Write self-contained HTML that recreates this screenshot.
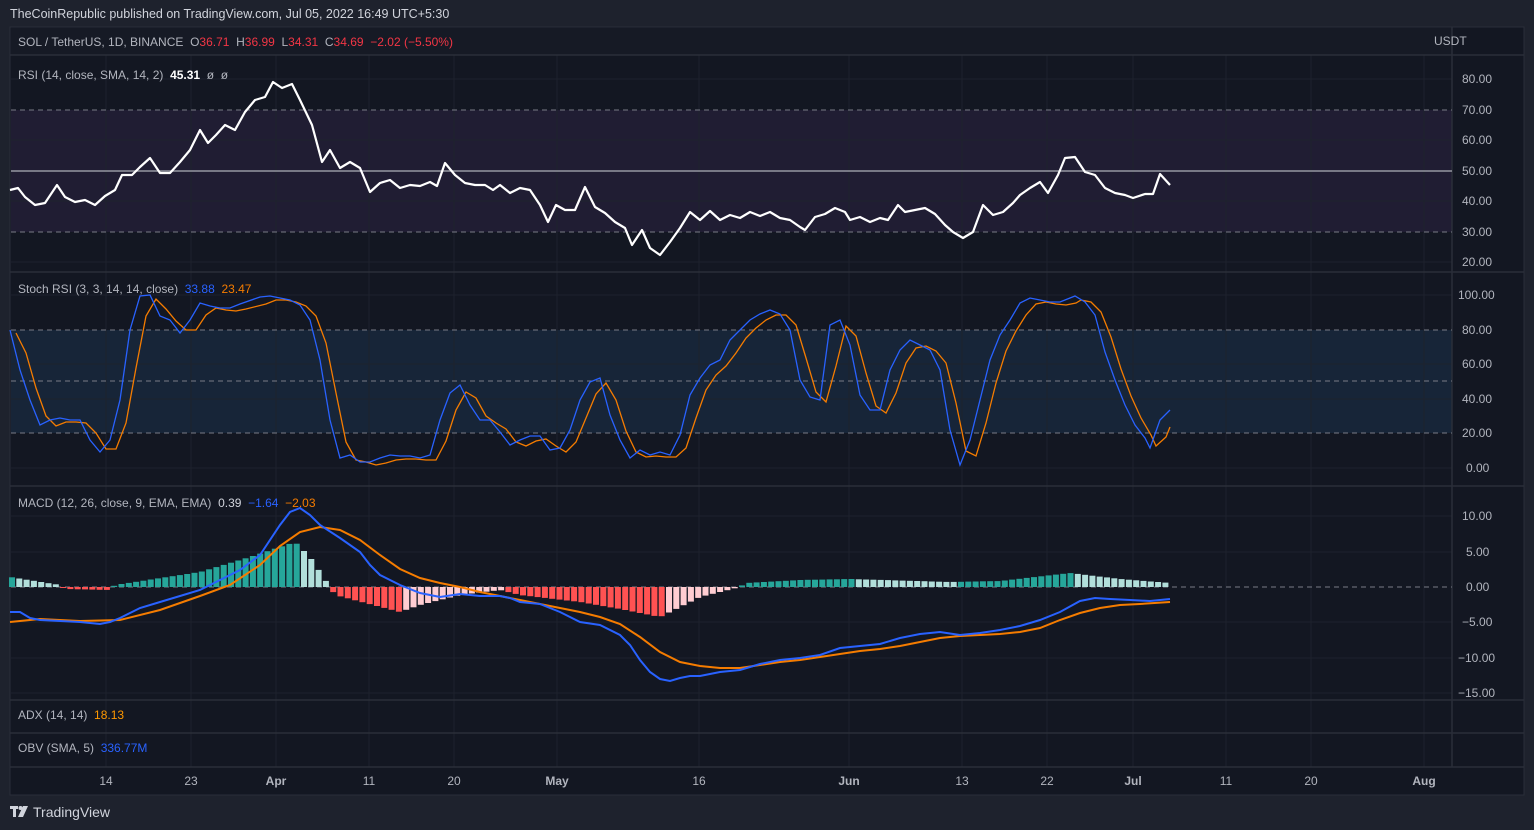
<!DOCTYPE html>
<html><head><meta charset="utf-8"><style>
*{margin:0;padding:0;box-sizing:border-box}
body{width:1534px;height:830px;background:#1e222d;font-family:"Liberation Sans",sans-serif;overflow:hidden;position:relative}
.t{position:absolute;font-size:12px;color:#b2b5be;white-space:nowrap}
</style></head><body>
<div class="t" style="left:10px;top:7px;font-size:12.5px;color:#d1d4dc">TheCoinRepublic published on TradingView.com, Jul 05, 2022 16:49 UTC+5:30</div>
<svg id="s" width="1534" height="830" style="position:absolute;left:0;top:0">
<rect x="10" y="27" width="1514" height="768" fill="#131722" stroke="#2a2e39"/>
<rect x="11" y="28" width="1441" height="27" fill="#161a25"/>
<rect x="11" y="110" width="1441" height="122" fill="#201d33"/>
<rect x="11" y="330" width="1441" height="103" fill="#172538"/>
<g stroke="#1e222d" stroke-width="1">
<line x1="106" y1="55" x2="106" y2="767"/><line x1="191" y1="55" x2="191" y2="767"/><line x1="276" y1="55" x2="276" y2="767"/><line x1="369" y1="55" x2="369" y2="767"/><line x1="454" y1="55" x2="454" y2="767"/><line x1="557" y1="55" x2="557" y2="767"/><line x1="699" y1="55" x2="699" y2="767"/><line x1="849" y1="55" x2="849" y2="767"/><line x1="962" y1="55" x2="962" y2="767"/><line x1="1047" y1="55" x2="1047" y2="767"/><line x1="1133" y1="55" x2="1133" y2="767"/><line x1="1226" y1="55" x2="1226" y2="767"/><line x1="1311" y1="55" x2="1311" y2="767"/><line x1="1424" y1="55" x2="1424" y2="767"/>
<line x1="11" y1="79" x2="1452" y2="79"/><line x1="11" y1="140" x2="1452" y2="140"/><line x1="11" y1="201" x2="1452" y2="201"/><line x1="11" y1="262" x2="1452" y2="262"/>
<line x1="11" y1="295" x2="1452" y2="295"/><line x1="11" y1="364" x2="1452" y2="364"/><line x1="11" y1="399" x2="1452" y2="399"/><line x1="11" y1="468" x2="1452" y2="468"/>
<line x1="11" y1="516" x2="1452" y2="516"/><line x1="11" y1="552" x2="1452" y2="552"/><line x1="11" y1="622" x2="1452" y2="622"/><line x1="11" y1="658" x2="1452" y2="658"/><line x1="11" y1="693" x2="1452" y2="693"/>
</g>
<g stroke="#2a2e39" stroke-width="1.5">
<line x1="10" y1="55" x2="1524" y2="55"/><line x1="10" y1="272" x2="1524" y2="272"/><line x1="10" y1="486" x2="1524" y2="486"/><line x1="10" y1="700" x2="1524" y2="700"/><line x1="10" y1="733" x2="1524" y2="733"/><line x1="10" y1="767" x2="1524" y2="767"/><line x1="1452" y1="27" x2="1452" y2="767"/>
</g>
<g stroke="#787b86" stroke-dasharray="5,4" stroke-width="1">
<line x1="11" y1="110" x2="1452" y2="110"/><line x1="11" y1="232" x2="1452" y2="232"/>
<line x1="11" y1="330" x2="1452" y2="330"/><line x1="11" y1="381" x2="1452" y2="381"/><line x1="11" y1="433" x2="1452" y2="433"/>
<line x1="11" y1="587" x2="1452" y2="587"/>
</g>
<line x1="11" y1="171" x2="1452" y2="171" stroke="#9598a1" stroke-width="1.5"/>
<g id="hist"></g>
<polyline fill="none" stroke="#fff" stroke-width="2.2" stroke-linejoin="round" points="10,190 18,188 25,197 35,205 45,203 57,185 65,197 75,202 85,200 95,205 105,196 115,190 122,175 132,175 140,167 150,158 160,173 170,173 180,162 190,150 200,130 208,143 216,135 225,125 235,130 245,112 255,100 265,97 273,82 282,88 292,84 300,100 312,125 322,162 330,150 340,168 350,162 360,168 370,192 380,183 390,180 400,188 410,185 420,186 430,182 437,186 445,163 455,175 465,183 475,185 485,185 493,190 500,185 510,193 520,188 530,190 540,205 548,222 556,205 565,210 575,210 585,187 595,207 605,213 615,222 625,228 632,245 642,230 650,248 660,255 670,242 680,228 690,212 700,220 710,211 720,220 730,215 740,218 750,212 760,216 770,212 780,218 790,220 800,227 805,230 815,217 825,214 835,208 845,212 850,220 860,217 870,222 880,218 888,220 898,205 905,212 915,210 925,208 935,214 945,225 953,232 963,238 973,232 983,205 993,215 1003,212 1013,203 1020,195 1030,188 1040,182 1048,193 1058,175 1065,158 1075,157 1085,172 1095,175 1105,188 1115,193 1125,195 1133,198 1145,194 1153,194 1160,174 1170,185"/>
<polyline id="so" fill="none" stroke="#f57c00" stroke-width="1.3"/>
<polyline id="sb" fill="none" stroke="#2962ff" stroke-width="1.3"/>
<polyline fill="none" stroke="#f57c00" stroke-width="2" points="10,622 40,619 80,621 120,620 160,610 200,596 230,585 260,565 280,546 300,532 320,527 340,530 360,540 380,555 400,569 420,578 440,583 460,587 480,592 500,596 520,600 540,604 560,608 580,612 600,617 620,624 640,637 660,652 680,662 700,666 720,668 740,668 760,665 780,662 800,660 820,657 840,654 860,651 880,649 900,646 920,642 940,638 960,636 980,635 1000,634 1020,632 1040,628 1060,620 1080,613 1100,608 1120,605 1140,604 1170,602"/>
<polyline fill="none" stroke="#2962ff" stroke-width="2" points="10,612 20,612 30,618 40,620 60,621 80,622 100,624 110,622 120,618 140,608 160,602 180,596 200,590 220,580 240,570 260,555 270,540 280,525 290,512 300,508 310,515 320,525 340,538 360,552 370,565 380,575 400,585 420,593 440,597 460,594 480,596 500,596 510,598 520,602 540,604 560,612 580,622 600,625 620,635 630,645 640,660 650,672 660,679 670,681 680,678 690,676 700,676 720,672 740,670 760,664 780,660 800,658 820,655 840,648 860,646 880,644 900,638 920,634 940,632 960,635 980,633 1000,630 1020,626 1040,620 1060,612 1080,601 1095,598 1110,599 1130,600 1150,601 1170,599"/>
<g font-family="Liberation Sans,sans-serif" font-size="12" fill="#b2b5be">
<text x="1434" y="45">USDT</text>
<text x="1462" y="83">80.00</text><text x="1462" y="114">70.00</text><text x="1462" y="144">60.00</text><text x="1462" y="175">50.00</text><text x="1462" y="205">40.00</text><text x="1462" y="236">30.00</text><text x="1462" y="266">20.00</text>
<text x="1458" y="299">100.00</text><text x="1462" y="334">80.00</text><text x="1462" y="368">60.00</text><text x="1462" y="403">40.00</text><text x="1462" y="437">20.00</text><text x="1466" y="472">0.00</text>
<text x="1462" y="520">10.00</text><text x="1466" y="556">5.00</text><text x="1466" y="591">0.00</text><text x="1462" y="626">−5.00</text><text x="1458" y="662">−10.00</text><text x="1458" y="697">−15.00</text>
<g text-anchor="middle"><text x="106" y="785">14</text><text x="191" y="785">23</text><text x="276" y="785" font-weight="bold">Apr</text><text x="369" y="785">11</text><text x="454" y="785">20</text><text x="557" y="785" font-weight="bold">May</text><text x="699" y="785">16</text><text x="849" y="785" font-weight="bold">Jun</text><text x="962" y="785">13</text><text x="1047" y="785">22</text><text x="1133" y="785" font-weight="bold">Jul</text><text x="1226" y="785">11</text><text x="1311" y="785">20</text><text x="1424" y="785" font-weight="bold">Aug</text></g>
</g>
<g fill="#d1d4dc"><rect x="10" y="806" width="8" height="3"/><rect x="13" y="806" width="3" height="11"/><circle cx="20.5" cy="808" r="2"/><polygon points="23,806 28,806 23,817 18,817"/></g>
</svg>
<div class="t" style="left:18px;top:35px"><span style="color:#b2b5be">SOL / TetherUS, 1D, BINANCE</span> &nbsp;O<span style="color:#f23645">36.71</span> &nbsp;H<span style="color:#f23645">36.99</span> &nbsp;L<span style="color:#f23645">34.31</span> &nbsp;C<span style="color:#f23645">34.69</span> &nbsp;<span style="color:#f23645">−2.02 (−5.50%)</span></div>
<div class="t" style="left:18px;top:68px">RSI (14, close, SMA, 14, 2) &nbsp;<b style="color:#fff">45.31</b> &nbsp;ø &nbsp;ø</div>
<div class="t" style="left:18px;top:282px">Stoch RSI (3, 3, 14, 14, close) &nbsp;<span style="color:#2962ff">33.88</span> &nbsp;<span style="color:#f57c00">23.47</span></div>
<div class="t" style="left:18px;top:496px">MACD (12, 26, close, 9, EMA, EMA) &nbsp;<span style="color:#d1d4dc">0.39</span> &nbsp;<span style="color:#2962ff">−1.64</span> &nbsp;<span style="color:#f57c00">−2.03</span></div>
<div class="t" style="left:18px;top:708px">ADX (14, 14) &nbsp;<span style="color:#ff9800">18.13</span></div>
<div class="t" style="left:18px;top:741px">OBV (SMA, 5) &nbsp;<span style="color:#2962ff">336.77M</span></div>
<div class="t" style="left:33px;top:804px;font-size:14px;color:#d1d4dc">TradingView</div>
<script>
var b=[[10,330],[20,370],[30,400],[40,425],[50,420],[60,418],[70,420],[80,420],[90,440],[100,452],[110,440],[120,400],[130,330],[140,296],[150,295],[160,316],[170,320],[180,333],[190,320],[200,303],[210,306],[220,308],[230,308],[240,304],[260,297],[270,296],[280,298],[290,300],[300,305],[310,320],[320,360],[330,420],[340,458],[350,455],[360,462],[370,462],[380,458],[390,455],[400,456],[410,456],[420,458],[430,455],[440,420],[450,393],[460,385],[470,405],[480,420],[490,420],[500,432],[510,445],[520,440],[530,436],[540,436],[550,450],[560,448],[570,430],[580,400],[590,382],[600,378],[610,415],[620,440],[630,458],[640,450],[650,455],[660,452],[670,455],[680,435],[690,395],[700,378],[710,365],[720,360],[730,340],[740,330],[750,320],[760,314],[770,310],[780,314],[790,330],[800,380],[810,397],[820,400],[830,325],[840,320],[850,345],[860,395],[870,410],[880,410],[890,370],[900,350],[910,340],[920,345],[930,350],[940,370],[950,430],[960,465],[970,440],[980,400],[990,360],[1000,335],[1010,320],[1020,303],[1030,298],[1040,300],[1050,302],[1060,302],[1070,298],[1075,296],[1085,302],[1095,315],[1105,352],[1115,380],[1125,405],[1135,425],[1145,438],[1150,448],[1160,420],[1170,410]];
document.getElementById('sb').setAttribute('points',b.map(p=>p.join(',')).join(' '));
var o=[];for(var i=0;i<b.length;i++){var a=b[Math.max(0,i-1)][1],c=b[i][1];var x=b[i][0]+6;if(x>1170)x=1170;o.push(x+','+((a+c)/2+3).toFixed(0));}
o[o.length-1]='1170,427';
document.getElementById('so').setAttribute('points',o.join(' '));
var k=[[10,10],[60,2],[65,-2],[110,-3],[115,2],[200,15],[250,30],[295,45],[310,30],[330,0],[335,-8],[400,-25],[420,-18],[460,-8],[500,-3],[520,-8],[580,-15],[620,-22],[660,-30],[700,-10],[740,0],[745,4],[800,7],[850,8],[950,5],[1000,6],[1070,14],[1120,8],[1170,4]];
function f(x){for(var i=0;i<k.length-1;i++){if(x>=k[i][0]&&x<=k[i+1][0]){var t=(x-k[i][0])/(k[i+1][0]-k[i][0]);return k[i][1]+t*(k[i+1][1]-k[i][1]);}}return 0;}
var g=document.getElementById('hist'),h='',prev=0;
for(var x=12;x<=1172;x+=7.3){var v=f(x);var col=v>=0?(v>=prev?'#26a69a':'#b2dfdb'):(v<=prev?'#ff5252':'#ffcdd2');var y=v>=0?587-v:587;h+='<rect x="'+(x-3).toFixed(1)+'" y="'+y.toFixed(1)+'" width="6" height="'+Math.max(1,Math.abs(v)).toFixed(1)+'" fill="'+col+'"/>';prev=v;}
g.innerHTML=h;
</script>
</body></html>
